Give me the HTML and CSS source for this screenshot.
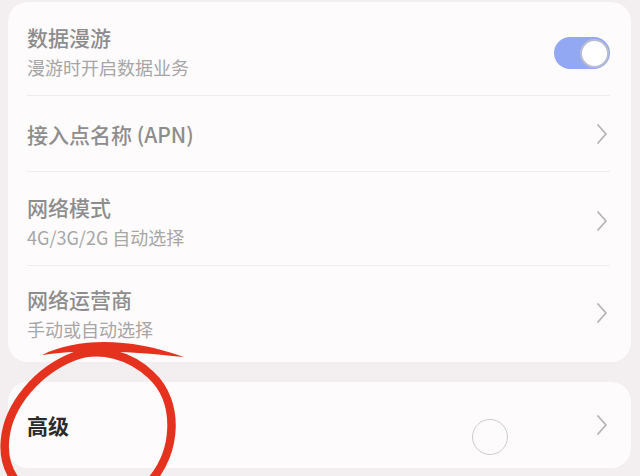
FILE: index.html
```html
<!DOCTYPE html>
<html lang="zh-CN">
<head>
<meta charset="utf-8">
<title>移动网络</title>
<link rel="stylesheet" href="styles.css">
</head>
<body>
<main class="page">
  <section class="card">
    <div class="row two first">
      <div class="texts">
        <div class="title">数据漫游</div>
        <div class="sub">漫游时开启数据业务</div>
      </div>
      <div class="toggle on"><span class="knob"></span></div>
    </div>
    <div class="row one">
      <div class="texts">
        <div class="title">接入点名称 (APN)</div>
      </div>
      <svg class="chev" viewBox="0 0 12 22" width="12" height="22"><polyline points="2,2 10,11 2,20"/></svg>
    </div>
    <div class="row two">
      <div class="texts">
        <div class="title">网络模式</div>
        <div class="sub">4G/3G/2G 自动选择</div>
      </div>
      <svg class="chev" viewBox="0 0 12 22" width="12" height="22"><polyline points="2,2 10,11 2,20"/></svg>
    </div>
    <div class="row two last">
      <div class="texts">
        <div class="title">网络运营商</div>
        <div class="sub">手动或自动选择</div>
      </div>
      <svg class="chev" viewBox="0 0 12 22" width="12" height="22"><polyline points="2,2 10,11 2,20"/></svg>
    </div>
  </section>
  <section class="card card-adv">
    <div class="row adv">
      <div class="texts">
        <div class="title strong">高级</div>
      </div>
      <svg class="chev" viewBox="0 0 12 22" width="12" height="22"><polyline points="2,2 10,11 2,20"/></svg>
    </div>
    <span class="touch"></span>
  </section>
</main>
<svg class="mark" viewBox="0 0 640 476" width="640" height="476">
  <path class="mark-top" d="M42 355 C80 337, 130 338, 184 357 C130 351, 80 349, 42 355 Z"/>
  <path class="mark-loop" d="M150 482 C177 452, 180 402, 151 375 C130 355, 100 347, 75 356 C38 370, 8 405, 5 440 C3 460, 10 476, 22 488"/>
</svg>
</body>
</html>
```

FILE: styles.css
```css
html, body {
  margin: 0;
  padding: 0;
  height: 476px;
  overflow: hidden;
}
body {
  background: #f3eff1;
  font-family: "Noto Sans CJK SC", "Noto Sans", sans-serif;
  position: relative;
}
.page {
  padding: 2px 9px 8px 8px;
  display: flex;
  flex-direction: column;
  gap: 20px;
}
.card {
  background: #fefbfc;
  border-radius: 20px;
  padding: 0 21px 0 19px;
  display: flex;
  flex-direction: column;
}
.card-adv {
  position: relative;
}
.row {
  display: flex;
  align-items: center;
  justify-content: space-between;
  border-bottom: 1px solid #f0ebed;
}
.row.two {
  padding: 21px 0 16px;
}
.row.two.last {
  padding: 19px 0 21px;
  border-bottom: none;
}
.row.one {
  height: 75px;
}
.row.adv {
  height: 86px;
  border-bottom: none;
}
.texts {
  display: flex;
  flex-direction: column;
  gap: 4px;
}
.title {
  font-size: 21px;
  line-height: 28px;
  font-weight: 500;
  color: #8d8d8d;
}
.title.strong {
  color: #2b2b2b;
  font-weight: 700;
}
.sub {
  font-size: 18px;
  line-height: 24px;
  color: #a6a6a6;
}
.chev {
  margin-right: 2px;
  fill: none;
  stroke: #b4b4b4;
  stroke-width: 1.8;
  stroke-linecap: round;
  stroke-linejoin: round;
}
.toggle {
  width: 56px;
  height: 32px;
  border-radius: 16px;
  background: #93a8f2;
  display: flex;
  align-items: center;
  justify-content: flex-end;
  padding: 0 1px;
  box-sizing: border-box;
  margin-top: 4px;
}
.knob {
  width: 29px;
  height: 29px;
  border-radius: 50%;
  background: #ffffff;
  border: 2px solid #b9bdd0;
  box-sizing: border-box;
}
.touch {
  position: absolute;
  left: 464px;
  top: 37px;
  width: 36px;
  height: 36px;
  border-radius: 50%;
  border: 1.5px solid #cbcbcb;
  box-sizing: border-box;
}
.mark {
  position: absolute;
  left: 0;
  top: 0;
  pointer-events: none;
}
.mark-top {
  fill: #e4321f;
}
.mark-loop {
  fill: none;
  stroke: #e4321f;
  stroke-width: 8.5;
  stroke-linecap: round;
}
```
